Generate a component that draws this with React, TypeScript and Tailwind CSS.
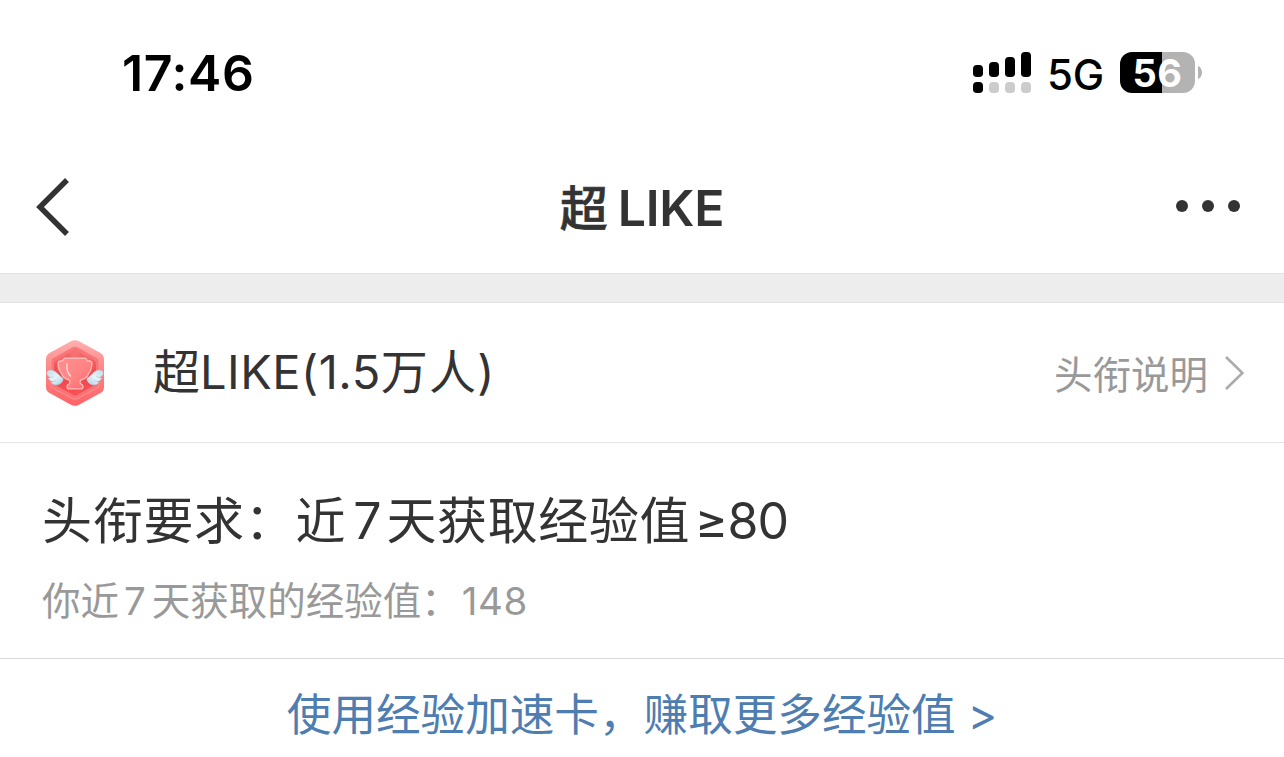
import React from "react";

function SignalIcon() {
  return (
    <svg className="h-[42px] w-[58px]" viewBox="0 0 58 42">
      <rect x="0" y="13" width="10" height="12" rx="3.8" />
      <rect x="16" y="10" width="10" height="15" rx="3.8" />
      <rect x="32" y="5" width="10" height="20" rx="3.8" />
      <rect x="48" y="0" width="10" height="25" rx="3.8" />
      <rect x="0" y="30" width="10" height="11" rx="3.8" />
      <g fill="#cccccc">
        <rect x="16" y="30" width="10" height="11" rx="3.8" />
        <rect x="32" y="30" width="10" height="11" rx="3.8" />
        <rect x="48" y="30" width="10" height="11" rx="3.8" />
      </g>
    </svg>
  );
}

function Battery() {
  return (
    <div className="flex items-center">
      <div className="flex h-[41px] w-[75px] items-center justify-center rounded-[12px] bg-[linear-gradient(90deg,#000_42px,#b3b3b3_42px)] text-[38px] leading-[41px] font-bold text-white">
        <span className="pt-px tracking-[0.4px]">56</span>
      </div>
      <svg className="ml-[3px] h-[13px] w-[4px]" viewBox="0 0 4 13">
        <path d="M0 0C2.600 1 4 3.6 4 6.5S2.600 12 0 13Z" fill="#b3b3b3" />
      </svg>
    </div>
  );
}

function Wing() {
  return (
    <g strokeLinejoin="round">
      <path
        d="M2.800 31C5 29.800 8.500 30.300 11 32.300C13.500 34.300 16 37.300 18 38.300C18.500 41 16 44 12.800 44.700C10 45.200 7.200 44.200 6.500 42.500C7.300 42 8 41.700 8.500 41.200C6 41.400 3.800 40.200 3.500 38C4.500 38 5.300 37.800 6 37.300C3.300 36.800 1.500 34.500 2 32Z"
        fill="url(#wing)"
        stroke="#b3d8e8"
        strokeWidth=".5"
      />
      <path d="M6 37.300C7 37.300 8 37.100 8.800 36.700M8.500 41.200C9.500 41.100 10.300 40.800 11 40.400" fill="none" stroke="#a3cbdf" strokeWidth=".6" />
    </g>
  );
}

function Badge() {
  return (
    <svg className="h-[66px] w-[60px]" viewBox="0 0 60 66">
      <defs>
        <linearGradient id="rim" x1="0" y1="0" x2="0" y2="1">
          <stop offset="0" stopColor="#ffb0af" />
          <stop offset=".45" stopColor="#fd8586" />
          <stop offset="1" stopColor="#ff6265" />
        </linearGradient>
        <linearGradient id="core" x1="0" y1="0" x2="0" y2="1">
          <stop offset="0" stopColor="#f56b6c" />
          <stop offset=".6" stopColor="#ee484c" />
          <stop offset="1" stopColor="#fb5155" />
        </linearGradient>
        <linearGradient id="cup" x1="0" y1="0" x2="1" y2="1">
          <stop offset="0" stopColor="#ff8f8d" />
          <stop offset=".5" stopColor="#ff8585" />
          <stop offset="1" stopColor="#fb686c" />
        </linearGradient>
        <linearGradient id="wing" x1="0" y1="0" x2="1" y2="1">
          <stop offset="0" stopColor="#bfdfed" />
          <stop offset=".5" stopColor="#e7f3f8" />
          <stop offset="1" stopColor="#a9cfe2" />
        </linearGradient>
      </defs>
      <path d="M25.5 1.5Q30 -1 34.5 1.5L55.5 13Q59 15 59 19V47Q59 51 55.5 53L34.5 64.5Q30 67 25.5 64.5L4.500 53Q1 51 1 47V19Q1 15 4.500 13Z" fill="url(#rim)" />
      <path d="M27 7.500Q30 6 33 7.500L52 18Q54 19.200 54 22V44Q54 47 52 48L33 58.500Q30 60 27 58.500L8 48Q6 47 6 44V22Q6 19.200 8 18Z" fill="#f87577" stroke="#ff9797" strokeWidth=".8" />
      <path d="M28 11Q30 10 32 11L49.500 21Q51 22 51 24V42Q51 44 49.500 45L32 55Q30 56 28 55L10.500 45Q9 44 9 42V24Q9 22 10.500 21Z" fill="url(#core)" />
      <path d="M30 33L25 12L30 11L35 12ZM30 33L12 22L17 18ZM30 33L48 22L43 18Z" fill="#f98484" opacity=".35" />
      <path
        d="M19.500 18.300H40.500C41.700 18.300 41.500 21 43 21H44.500C46.500 21 47.200 22.500 46.800 25C46.300 29.500 45.500 31.500 43.500 33.500C42.500 37 39.500 39 36 40C34.800 41.300 34.500 43 36 43.800C38.500 44.600 38.500 48.900 36.500 48.900H23.500C21.500 48.900 21.500 44.600 24 43.800C25.500 43 25.200 41.300 24 40C20.500 39 17.500 37 16.500 33.500C14.500 31.500 13.500 29.500 13.200 25C12.800 22.500 13.500 21 15.500 21H17C18.500 21 18.300 18.300 19.500 18.300Z"
        fill="url(#cup)"
        stroke="#ffb9b8"
        strokeWidth="1.400"
      />
      <path d="M22 24C21.500 29 22.500 33 25.500 36" fill="none" stroke="#ffd9d8" strokeWidth="1.500" strokeLinecap="round" />
      <Wing />
      <g transform="translate(60 0) scale(-1 1)">
        <Wing />
      </g>
    </svg>
  );
}

function StatusBar() {
  return (
    <div className="flex h-[146px] items-center justify-between pr-[82px] pl-[122px] text-black">
      <span className="text-[50px] font-semibold tracking-[0.6px]">17:46</span>
      <div className="-mt-px flex items-center">
        <SignalIcon />
        <span className="mt-[3px] ml-4 text-[42px] font-medium tracking-[-0.2px]">5G</span>
        <div className="ml-4">
          <Battery />
        </div>
      </div>
    </div>
  );
}

function NavBar() {
  return (
    <div className="grid h-[128px] grid-cols-3 items-center border-b border-[#e2e2e2] px-9 pb-[6px]">
      <svg className="h-[58px] w-[34px]" viewBox="0 0 34 58" fill="none" stroke="#333" strokeWidth="5.500">
        <path d="M31 2L4 29L31 56" />
      </svg>
      <h1 className="flex items-baseline justify-center whitespace-pre pt-[3px] text-[50px] leading-none">
        <span className="text-[48px] font-medium [-webkit-text-stroke:0.6px_#333]">超</span>
        <span className="ml-2.5 font-semibold tracking-[-0.3px]">LIKE</span>
      </h1>
      <svg className="mr-[8px] mb-px h-3 w-16 justify-self-end" viewBox="0 0 64 12" fill="#333">
        <circle cx="6" cy="6" r="6" />
        <circle cx="32" cy="6" r="6" />
        <circle cx="58" cy="6" r="6" />
      </svg>
    </div>
  );
}

export default function App() {
  return (
    <main className="h-[757px] w-full overflow-hidden bg-white font-['Inter','Noto_Sans_CJK_SC',sans-serif] text-[#333]">
      <StatusBar />
      <NavBar />
      <div className="h-[29px] border-b border-[#e2e2e2] bg-[#ededed]" />
      <div className="flex h-[140px] items-center border-b border-[#e4e4e4] pr-10 pl-[45px]">
        <Badge />
        <div className="mb-[3px] ml-12 flex items-baseline whitespace-pre text-[47px] leading-none">
          <span>超</span>
          <span className="tracking-[0.500px]">LIKE(1.5</span>
          <span className="tracking-[1.200px]">万人</span>
          <span>)</span>
        </div>
        <div className="ml-auto flex items-center text-[38.500px] leading-none text-[#999]">
          <span className="-ml-px pt-1.5">头衔说明</span>
          <svg className="ml-[17px] h-[34px] w-[19px]" viewBox="0 0 19 34" fill="none" stroke="#aaa" strokeWidth="2.600">
            <path d="M1 1L17.500 17L1 33" />
          </svg>
        </div>
      </div>
      <div className="flex h-[216px] flex-col border-b border-[#d9d9d9] pt-[50px] pl-[42px] whitespace-pre">
        <div className="flex h-[56px] items-baseline text-[50px] leading-[56px]">
          <span className="tracking-[0.700px]">头衔要求：近</span>
          <span className="ml-[7px]">7</span>
          <span className="ml-[5px] tracking-[0.600px]">天获取经验值</span>
          <span className="ml-[5px] tracking-[-0.800px]">≥80</span>
        </div>
        <div className="mt-[30px] flex h-[44px] items-baseline text-[38.500px] leading-[44px] text-[#999]">
          <span>你近</span>
          <span className="ml-[5px]">7</span>
          <span className="ml-[6px]">天获取的经验值：</span>
          <span className="ml-[2px] tracking-[0.600px]">148</span>
        </div>
      </div>
      <a className="flex h-[98px] items-baseline justify-center pt-[22px] text-[44.600px] leading-[68px] whitespace-pre text-[#4e7db1]">
        <span>使用经验加速卡，赚取更多经验值</span>
        <span className="ml-[12px]">&gt;</span>
      </a>
    </main>
  );
}
